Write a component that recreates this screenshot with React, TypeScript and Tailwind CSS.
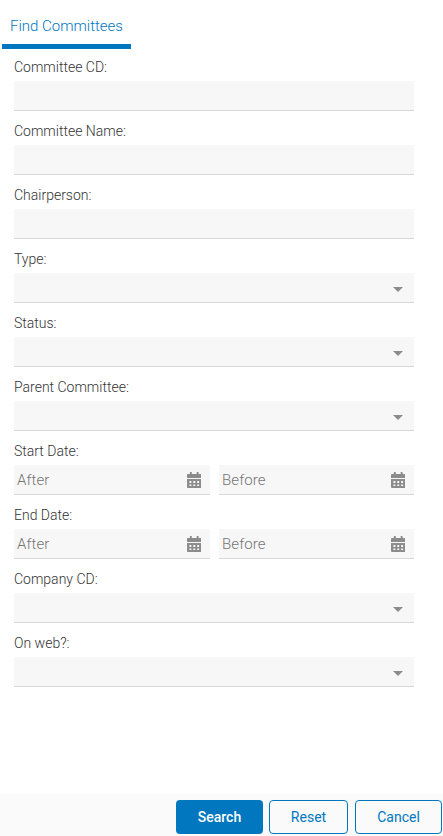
const FONT = "font-['Roboto',sans-serif]";

function Label({ text }: { text: string }) {
  return <div className="h-[20px] text-[14px] leading-[20px] font-light text-[#333]">{text}</div>;
}

function CalendarIcon() {
  return (
    <svg width="14.5" height="16" viewBox="0 0 15 16" fill="#8c8c8c" preserveAspectRatio="none" className="shrink-0">
      <rect x="3" y="0" width="2" height="3" />
      <rect x="10" y="0" width="2" height="3" />
      <path d="M1 2h13a1 1 0 0 1 1 1v3H0V3a1 1 0 0 1 1-1z" />
      <path d="M0 7h15v8a1 1 0 0 1-1 1H1a1 1 0 0 1-1-1z" />
      <g fill="#f7f7f7">
        <rect x="2.5" y="9" width="2" height="2" />
        <rect x="6.5" y="9" width="2" height="2" />
        <rect x="10.5" y="9" width="2" height="2" />
        <rect x="2.5" y="12.5" width="2" height="1.5" />
        <rect x="6.5" y="12.5" width="2" height="1.5" />
        <rect x="10.5" y="12.5" width="2" height="1.5" />
      </g>
    </svg>
  );
}

function TextField({ label }: { label: string }) {
  return (
    <div className="mb-[10px]">
      <Label text={label} />
      <div className="mt-[4px] h-[30px] border-b border-[#d9d9d9] bg-[#f7f7f7]" />
    </div>
  );
}

function SelectField({ label }: { label: string }) {
  return (
    <div className="mb-[10px]">
      <Label text={label} />
      <div className="mt-[4px] flex h-[30px] items-center justify-end border-b border-[#d9d9d9] bg-[#f7f7f7] pr-[11px]">
        <div className="mt-[4px] h-0 w-0 border-x-[5.5px] border-t-[5px] border-x-transparent border-t-[#8c8c8c]" />
      </div>
    </div>
  );
}

function DateInput({ placeholder }: { placeholder: string }) {
  return (
    <div className="flex h-[30px] items-center justify-between border-b border-[#d9d9d9] bg-[#f7f7f7] pr-[9px] pl-[3px]">
      <span className="pt-[1px] text-[15px] font-light tracking-[0.1px] text-[#757575]">{placeholder}</span>
      <CalendarIcon />
    </div>
  );
}

function DateField({ label }: { label: string }) {
  return (
    <div className="mb-[10px]">
      <Label text={label} />
      <div className="mt-[4px] grid grid-cols-[196px_195px] gap-x-[9px]">
        <DateInput placeholder="After" />
        <DateInput placeholder="Before" />
      </div>
    </div>
  );
}

export default function App() {
  return (
    <div className={`${FONT} flex h-[836px] w-[443px] flex-col overflow-hidden bg-white`}>
      <div className="pl-[2px]">
        <div className="h-[49px] w-[129px] border-b-[5px] border-[#0077bf] pt-[15px] pl-[8px] text-[15px] leading-[22px] font-light whitespace-nowrap text-[#0077bf]">
          Find Committees
        </div>
      </div>
      <div className="flex-1 pt-[8px] pr-[29px] pl-[14px]">
        <TextField label="Committee CD:" />
        <TextField label="Committee Name:" />
        <TextField label="Chairperson:" />
        <SelectField label="Type:" />
        <SelectField label="Status:" />
        <SelectField label="Parent Committee:" />
        <DateField label="Start Date:" />
        <DateField label="End Date:" />
        <SelectField label="Company CD:" />
        <SelectField label="On web?:" />
      </div>
      <div className="flex h-[42px] items-start justify-end bg-[#fafafa] pt-[6px] pr-[1px]">
        <button className="h-[34px] w-[87px] rounded-[4px] bg-[#0077bf] text-[14px] font-medium text-white">Search</button>
        <button className="ml-[6px] h-[34px] w-[79px] rounded-[4px] border border-[#0077bf] text-[14px] text-[#0077bf]">Reset</button>
        <button className="ml-[7px] h-[34px] w-[87px] rounded-[4px] border border-[#0077bf] text-[14px] text-[#0077bf]">Cancel</button>
      </div>
    </div>
  );
}
